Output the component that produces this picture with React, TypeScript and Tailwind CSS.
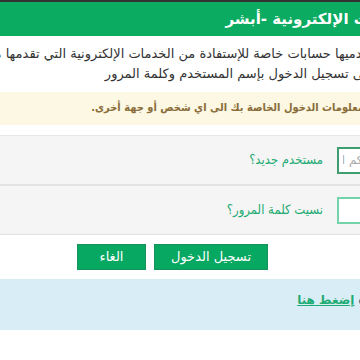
const condensed = { fontFamily: '"DejaVu Sans Condensed", "DejaVu Sans", sans-serif' }

export default function App() {
  return (
    <div className="w-[360px] h-[360px] overflow-hidden bg-white" style={{ fontFamily: '"DejaVu Sans", sans-serif' }}>
      <div dir="rtl" className="w-[460px]">
        <div className="h-[2px] bg-[#333333]" />
        <div className="h-[34px] bg-[#0bab62] flex items-center pr-[46px]">
          <h1 className="text-[15px] font-bold text-white whitespace-nowrap">الخدمات الإلكترونية -أبشر</h1>
        </div>

        <div className="pr-[62px] pt-[8px] pb-[6px] text-[13px] leading-[20px] text-[#333333]">
          <p className="whitespace-nowrap">لمستخدميها حسابات خاصة للإستفادة من الخدمات الإلكترونية التي تقدمها من</p>
          <p className="whitespace-nowrap mr-[6px]">ثم على تسجيل الدخول بإسم المستخدم وكلمة المرور</p>
        </div>

        <div className="mt-[2px] h-[33px] bg-[#fcf8e3] flex items-center pr-[62px]">
          <p className="text-[11px] font-bold text-[#8a6d3b] whitespace-nowrap" style={condensed}>
            لا تعط معلومات الدخول الخاصة بك الى اي شخص أو جهة أخرى.
          </p>
        </div>

        <div className="mt-[10px] border-t border-[#e8e8e8]">
          <div className="h-[50px] bg-[#f5f5f5] border-b-2 border-[#e3e3e3] flex items-center">
            <div className="w-[63px] shrink-0" />
            <input
              className="w-[60px] h-[27px] bg-white border-2 border-[#3f9e70] pr-[12px] pl-[4px] text-[12px] text-[#999999] outline-none placeholder:text-[#aaaaaa]"
              placeholder="هويتكم الوطنية"
            />
            <a href="#" className="mr-[14px] text-[13px] text-[#1fab74] whitespace-nowrap" style={condensed}>مستخدم جديد؟</a>
          </div>
          <div className="h-[49px] bg-[#f5f5f5] border-b border-[#e3e3e3] flex items-center">
            <div className="w-[63px] shrink-0" />
            <input type="password" className="w-[60px] h-[27px] bg-white border-2 border-[#74d3a8] outline-none" />
            <a href="#" className="mr-[14px] text-[13px] text-[#1fab74] whitespace-nowrap" style={condensed}>نسيت كلمة المرور؟</a>
          </div>
        </div>

        <div className="flex gap-[8px] pr-[192px] pt-[9px]">
          <button className="w-[114px] h-[26px] bg-[#07a862] border border-[#16925a] text-white text-[13px]">تسجيل الدخول</button>
          <button className="w-[69px] h-[26px] bg-[#07a862] border border-[#16925a] text-white text-[13px]">الغاء</button>
        </div>

        <div className="mt-[9px] h-[51px] bg-[#d9edf7] pr-[45px] pt-[12px]">
          <p className="text-[12px] font-bold text-[#31708f] whitespace-nowrap">
            للمساعدة <a href="#" className="text-[#1fab74] underline">إضغط هنا</a>
          </p>
        </div>
      </div>
    </div>
  )
}
